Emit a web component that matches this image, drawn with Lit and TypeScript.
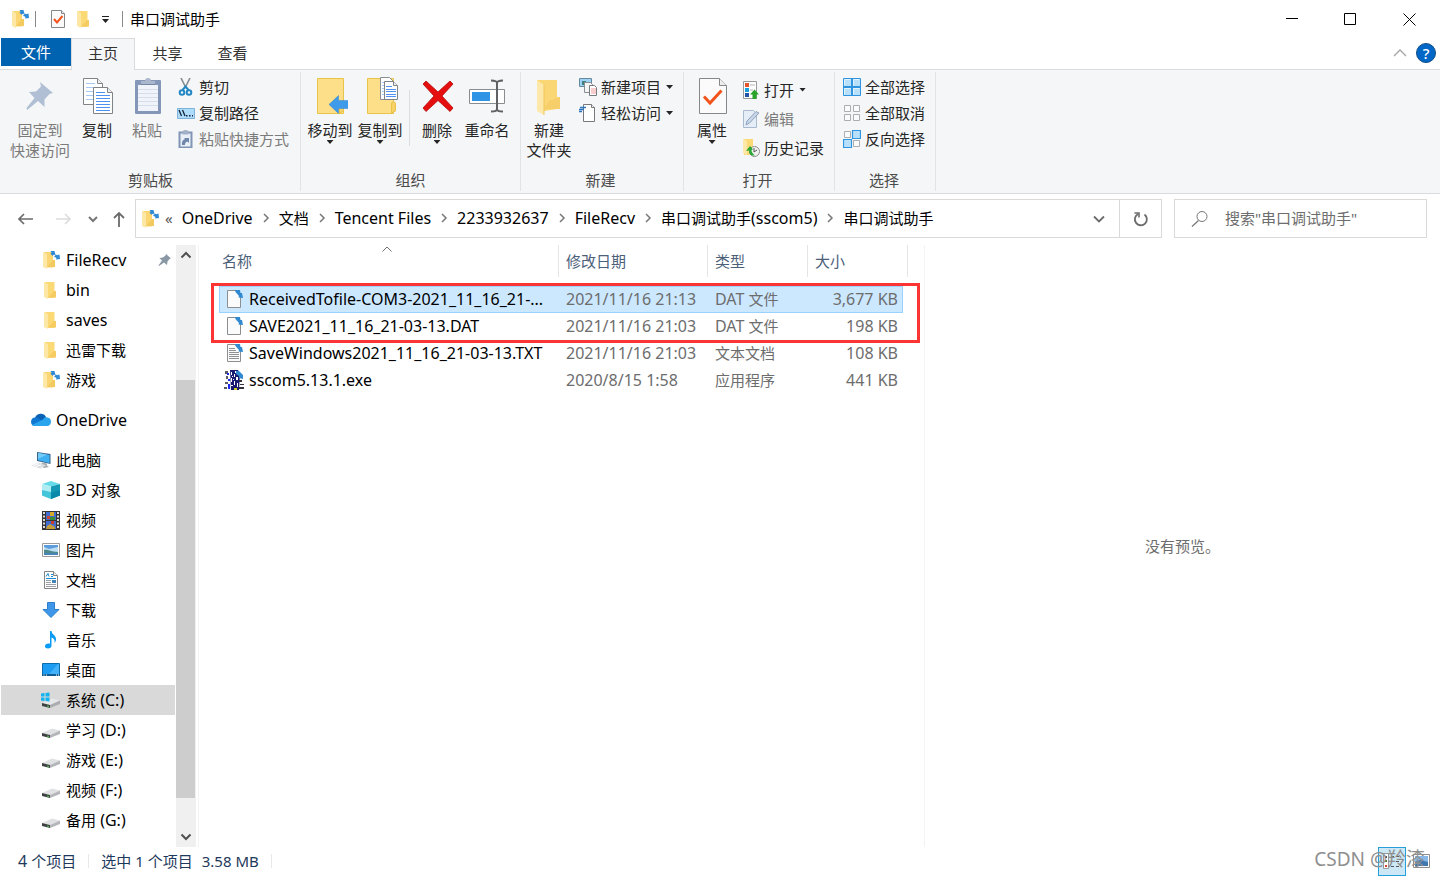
import { LitElement, html, css, nothing, TemplateResult } from "lit";
import { customElement, property, state } from "lit/decorators.js";
import { classMap } from "lit/directives/class-map.js";

const folderShape = html`
  <svg width="18" height="18" viewBox="0 0 18 18" aria-hidden="true">
    <path d="M3 1h9.500v16H6z" fill="#fbd975"/><path d="M12 10h2v6.500H6z" fill="#f5cb62"/>
    <path d="M2 1l4 2v15l-4-2z" fill="#fde7a5"/>
  </svg>`;

const linkedFolder = html`
  <svg width="18" height="18" viewBox="0 0 18 18" aria-hidden="true">
    <path d="M2 1h9v15.500H5z" fill="#fbd673"/><path d="M11 9h2v7H5z" fill="#f3ca60"/>
    <path d="M1 1l4 2v15l-4-2z" fill="#fde8a8"/>
    <path d="M8.500 0l4 0 1 4-1.500-.300-1.500 1-2-2 1-1zM12 5.500l2-2 1 .800 2.500-.800.500 4.500-4 .500.500-1.500z" fill="#2f8ad6"/>
  </svg>`;

const pinSmall = html`
  <svg width="14" height="14" viewBox="0 0 14 14" aria-hidden="true">
    <path d="M8 1l5 4.500-1.500.500-2 2.500-.500 3.500-3-2.500L1 13l-.500-.500 3.500-5L1.500 5 5 4.500 7.500 2.500z" fill="#8a98a5"/>
  </svg>`;

const drive = html`
  <svg width="20" height="18" viewBox="0 0 20 18" aria-hidden="true">
    <path d="M1 12l10-4.500 8 2L9 14z" fill="#e0e1e3"/>
    <path d="M9 14L19 9.500V13L9 17z" fill="#b4b6b9"/>
    <path d="M1 12l8 2v3L1 15z" fill="#3f4144"/>
    <path d="M6 14.500l2 .600v1l-2-.500z" fill="#42d03c"/>
  </svg>`;

const systemDrive = html`
  <svg width="20" height="18" viewBox="0 0 20 18" aria-hidden="true">
    <path d="M1 12l10-4.500 8 2L9 14z" fill="#e6e7e8"/>
    <path d="M9 14L19 9.500V13L9 17z" fill="#aaacaf"/>
    <path d="M1 12l8 2v3L1 15z" fill="#3f4144"/>
    <path d="M6 14.500l2 .600v1l-2-.500z" fill="#42d03c"/>
    <path d="M0 2.500l3.500-.500v3.500H0zM4.500 2L8.500 1.500v4h-4zM0 6.500h3.500V10L0 9.500zM4.500 6.500h4v4l-4-.500z" fill="#12b3ee"/>
  </svg>`;

const sideIcons: Record<string, TemplateResult> = {
  folder: folderShape,
  linked: linkedFolder,
  cloud: html`
    <svg width="21" height="16" viewBox="0 0 21 16" aria-hidden="true">
      <path d="M5 6A6 6 0 0 1 16 5l-2 5-8-1z" fill="#0a62b5"/>
      <path d="M4.500 14A4.300 4.300 0 0 1 5 5.500c2 0 3 .500 4 1.200L13 9l-4 5z" fill="#1178d2"/>
      <path d="M2 13L13 7.500c1-2 3-2.500 4.500-2A4.300 4.300 0 0 1 17 14H4.500C3.500 14 2.500 13.500 2 13z" fill="#2aa4ec"/>
    </svg>`,
  pc: html`
    <svg width="21" height="18" viewBox="0 0 21 18" aria-hidden="true">
      <path d="M7 1l13.500 2v10L7 10z" fill="#38648a"/><path d="M8 2l11.500 2v8L8 9.300z" fill="#3fb0f2"/>
      <path d="M8 2l9 1.500L8 8z" fill="#73cbf8"/>
      <path d="M12 11.500l5 1v2l2 1.500-5 1-3-2z" fill="#a5adb3"/>
      <path d="M1 14.500l8-3 7 3-6 3z" fill="#d9dee2"/><path d="M3 14.500l6-1.800M5 15.800l6-1.800" stroke="#fff"/>
    </svg>`,
  cube: html`
    <svg width="18" height="18" viewBox="0 0 18 18" aria-hidden="true">
      <path d="M0 3l9-3 9 3-9 2.500z" fill="#67dbe8"/><path d="M0 3l9 2.500V18l-9-3.500z" fill="#b0edf2"/>
      <path d="M0 9l9 2v7l-9-3.500z" fill="#44c5da"/>
      <path d="M18 3L9 5.500V18l9-3.500z" fill="#1697b3"/><path d="M18 9L9 12v6l9-3.500z" fill="#0b89a8"/>
    </svg>`,
  video: html`
    <svg width="18" height="19" viewBox="0 0 18 19" aria-hidden="true">
      <path d="M0 0h18v19H0z" fill="#343434"/><path d="M4 1h10v8H4zM4 10h10v8H4z" fill="#3f6ed0"/>
      <path d="M1 1h2v2H1zM1 4.500h2v2H1zM1 8h2v2H1zM1 11.500h2v2H1zM1 15h2v2H1zM15 1h2v2h-2zM15 4.500h2v2h-2zM15 8h2v2h-2zM15 11.500h2v2h-2zM15 15h2v2h-2z" fill="#dcdcdc"/>
      <path d="M8 1h4v4H8z" fill="#d7aa29"/><path d="M5 5h3v3H5z" fill="#cf4638"/><path d="M8 6h5v3H8z" fill="#398d35"/>
      <path d="M9 10h3v3H9z" fill="#c83b2e"/><path d="M5 15l3-2 5 3v2H4z" fill="#c59c37"/>
    </svg>`,
  image: html`
    <svg width="18" height="16" viewBox="0 0 18 16" aria-hidden="true">
      <path d="M.500 1.500h17v13H.500z" fill="#fff" stroke="#9b9b9b"/><path d="M2 3h14v10H2z" fill="#bddff6"/>
      <path d="M2 3h14v2L7 7 2 5z" fill="#5b9cdd"/><path d="M2 8c4-1 7 2 14 2v3H2z" fill="#4f8a8b"/><path d="M2 11h14v2H2z" fill="#4886b9"/>
    </svg>`,
  document: html`
    <svg width="18" height="18" viewBox="0 0 18 18" aria-hidden="true">
      <path d="M2.500.500h9l4 4v13h-13z" fill="#fff" stroke="#858585"/><path d="M11.500.500v4h4" fill="#eee" stroke="#858585"/>
      <path d="M4 5.500l2-3 1 3M9 3.500h2M9 5.500h2M4 7.500h10" fill="none" stroke="#198ad6"/>
      <path d="M4 9.500h5M4 11.500h5M4 13.500h10M4 15.500h10" stroke="#9aa0a5"/><path d="M10 9h4v3h-4z" fill="#4383b5"/>
    </svg>`,
  download: html`
    <svg width="18" height="18" viewBox="0 0 18 18" aria-hidden="true">
      <path d="M5.500 1.500h7v7h4.500l-8 8-8-8h4.500z" fill="#3e97e8" stroke="#2b7fcd"/>
    </svg>`,
  music: html`
    <svg width="18" height="18" viewBox="0 0 18 18" aria-hidden="true">
      <path d="M8 0h1.500c.500 4 4.500 4 4.500 8 0 2-.700 3-1.500 4 .500-3-.500-4.500-3-5.500v8c0 2-1.500 3-3.500 3s-3-1-3-2.300c0-2 2.500-3.200 5-2.400z" fill="#0a9bf5"/>
    </svg>`,
  desktop: html`
    <svg width="18" height="16" viewBox="0 0 18 16" aria-hidden="true">
      <path d="M.500 1.500h17v12H.500z" fill="#1b9bf2" stroke="#0b6cae"/><path d="M16 2h1v10H7z" fill="#42b1fa"/>
      <path d="M0 12h18v2H0z" fill="#0d5d95"/><path d="M1.500 13h1M4 13h1M14 13h1M16 13h1" stroke="#fff"/>
    </svg>`,
  system: systemDrive,
  drive,
};

const bigIcons: Record<string, TemplateResult> = {
  pin: html`
    <svg width="36" height="38" viewBox="0 0 36 38" aria-hidden="true">
      <path d="M18 5l13 11-3.500 1-5 5.500 0 7.500-6.500-6-9 7.500L5 33l-.500-2 8-10L7 15l7-.500 5-5z" fill="#b1bfd4"/>
    </svg>`,
  copy: html`
    <svg width="36" height="38" viewBox="0 0 36 38" aria-hidden="true">
      <path d="M4.500 1.500h14l5 5v21h-19z" fill="#fff" stroke="#7f8489"/><path d="M18.500 1.500v5h5" fill="#eee" stroke="#7f8489"/>
      <path d="M7 6.500h9M7 10.500h14M7 14.500h14M7 18.500h14M7 22.500h14" stroke="#a6c8f5"/>
      <path d="M14.500 10.500h14l5 5v21h-19z" fill="#fff" stroke="#7f8489"/><path d="M28.500 10.500v5h5" fill="#eee" stroke="#7f8489"/>
      <path d="M17 15.500h9M17 18.500h14M17 21.500h14M17 24.500h14M17 27.500h14M17 30.500h14M17 33.500h14" stroke="#4e91f3"/>
    </svg>`,
  paste: html`
    <svg width="36" height="38" viewBox="0 0 36 38" aria-hidden="true">
      <rect x="6" y="3" width="26" height="34" rx="1" fill="#8497b8"/><path d="M9 8h20v26H9z" fill="#f0f4fa"/>
      <path d="M9 12.500h20M9 16.500h20M9 20.500h20M9 24.500h20M9 28.500h20" stroke="#d5deeb"/>
      <path d="M12 4h4a3 3 0 0 1 6 0h4v4H12z" fill="#aab7cc"/><path d="M12 7h14v1H12z" fill="#7687a3"/>
    </svg>`,
  move: html`
    <svg width="36" height="38" viewBox="0 0 36 38" aria-hidden="true">
      <path d="M5.500 1.500h26v35h-26z" fill="#fddf89" stroke="#e9c44b"/><path d="M27.500 36V27c0-3 4-3 4 0v7z" fill="#f8d268" stroke="#e9c44b"/>
      <path d="M17 27.500l9.500-9v5h10v8h-10v5z" fill="#3e9be9" stroke="#2f83d0" stroke-width=".500"/>
    </svg>`,
  copyTo: html`
    <svg width="36" height="38" viewBox="0 0 36 38" aria-hidden="true">
      <path d="M5.500 1.500h26v35h-26z" fill="#fddf89" stroke="#e9c44b"/><path d="M29.500 36V27c0-3 4-3 4 0v7z" fill="#f8d268" stroke="#e9c44b"/>
      <path d="M18.500.500h9l4 4v18h-13z" fill="#fff" stroke="#8b8f93"/><path d="M20 5.500h8M20 8.500h8M20 11.500h8M20 14.500h8M20 17.500h8" stroke="#a6c8f5"/>
      <path d="M22.500 4.500h9l4 4v14h-13z" fill="#fff" stroke="#7f8489"/><path d="M31.500 4.500v4h4" fill="#eee" stroke="#7f8489"/>
      <path d="M24 9.500h6M24 12.500h10M24 14.500h10M24 17.500h10M24 19.500h10" stroke="#4e91f3"/>
    </svg>`,
  remove: html`
    <svg width="36" height="38" viewBox="0 0 36 38" aria-hidden="true">
      <path d="M7 4l12 11L31 4l3 3-11 12 11 12-3 3.500L19 23.500 7 34.500 4 31l11-12L4 7z" fill="#e60f0f" stroke="#b20a0a" stroke-width=".800"/>
    </svg>`,
  rename: html`
    <svg width="38" height="38" viewBox="0 0 38 38" aria-hidden="true">
      <path d="M1.500 12.500h35v14h-35z" fill="#fff" stroke="#8a8d90"/><path d="M4 15h18v9H4z" fill="#2f93e6"/>
      <path d="M29 5v28M23 3.500c3 0 6 0 6 2.500 0-2.500 3-2.500 6-2.500M23 34.500c3 0 6 0 6-2.500 0 2.500 3 2.500 6 2.500" fill="none" stroke="#5f6265" stroke-width="2"/>
    </svg>`,
  newFolder: html`
    <svg width="36" height="38" viewBox="0 0 36 38" aria-hidden="true">
      <path d="M6 3h20v29l-13 2z" fill="#fbd675"/><path d="M19 23h3l5-3h2v12H13z" fill="#f6cf6a"/>
      <path d="M6 3l7 5v30l-7-4z" fill="#fde8a9"/><path d="M13 8v30" stroke="#efc559"/>
    </svg>`,
  properties: html`
    <svg width="36" height="38" viewBox="0 0 36 38" aria-hidden="true">
      <path d="M5.500 1.500h20l7 7v28h-27z" fill="#fbfbfb" stroke="#85888b"/><path d="M25.500 1.500v7h7" fill="#eee" stroke="#85888b"/>
      <path d="M10 19.500l6 6.500L27.500 13.500" fill="none" stroke="#f2541b" stroke-width="3"/>
    </svg>`,
};

const smallIcons: Record<string, TemplateResult> = {
  cut: html`
    <svg width="18" height="18" viewBox="0 0 18 18" aria-hidden="true">
      <path d="M4 0l5 10M13 0L8 10" stroke="#858b91" stroke-width="1.600"/>
      <circle cx="5" cy="14.500" r="2.300" fill="none" stroke="#2287c4" stroke-width="2"/><circle cx="12" cy="14.500" r="2.300" fill="none" stroke="#2287c4" stroke-width="2"/>
      <path d="M5.500 12L8.500 8.500 11.500 12" fill="none" stroke="#2287c4" stroke-width="2"/>
    </svg>`,
  path: html`
    <svg width="18" height="18" viewBox="0 0 18 18" aria-hidden="true">
      <path d="M.500 4.500h17v10H.500z" fill="#b0dcfb" stroke="#7fb2d8"/>
      <path d="M2 6l2.500 6M5.500 6L8 12" stroke="#10233a" stroke-width="1.300"/><path d="M9 11h1.500v1.500H9zM12 11h1.500v1.500H12zM15 11h1v1.500h-1z" fill="#10233a"/>
    </svg>`,
  shortcut: html`
    <svg width="18" height="18" viewBox="0 0 18 18" aria-hidden="true">
      <path d="M2.500 2.500h12v15h-12z" fill="#e9eff7" stroke="#8195b6" stroke-width="2"/><path d="M5.500 2a3 2 0 0 1 6 0v2.500h-6z" fill="#a3b1c8"/>
      <path d="M5 15c-.500-3 .500-5 3-6L7 8h5v5l-1.500-1.500C8.500 12 8 13 8 15z" fill="#7087ab"/>
    </svg>`,
  newItem: html`
    <svg width="18" height="18" viewBox="0 0 18 18" aria-hidden="true">
      <path d="M.500.500h12v8H.500z" fill="#9bd2f5" stroke="#68889d"/><path d="M3 3h4v4H3z" fill="#43807c"/>
      <path d="M5.500 4.500h6l2 2v8h-8z" fill="#f5f5f5" stroke="#8c8f92"/>
      <path d="M10.500 7.500h5l2 2v8h-7z" fill="#fff" stroke="#77797c"/><path d="M12 11h5M12 13h5M12 15h5" stroke="#ee9a9a"/>
    </svg>`,
  easyAccess: html`
    <svg width="18" height="18" viewBox="0 0 18 18" aria-hidden="true">
      <path d="M4.500.500h8l3 3v14h-11z" fill="#fff" stroke="#77797c"/><path d="M12.500.500v3h3" fill="#eee" stroke="#77797c"/>
      <path d="M1 3.500h6M0 5.500h5M0 7.500h3" stroke="#2e76bd" stroke-width="1.300"/>
    </svg>`,
  open: html`
    <svg width="18" height="18" viewBox="0 0 18 18" aria-hidden="true">
      <path d="M1.500.500h13v17h-13z" fill="#fff" stroke="#989a9c"/><path d="M3 2h4v4H3z" fill="#e4572e"/><path d="M3 7h4v4H3z" fill="#1ba0dc"/><path d="M3 12h4v4H3z" fill="#2354a8"/>
      <path d="M8 4h5M8 9h3" stroke="#b3b3b3"/><path d="M12.500 8.500l4.500 5h-2.500v5h-4v-5H8z" fill="#29a329"/>
    </svg>`,
  edit: html`
    <svg width="18" height="18" viewBox="0 0 18 18" aria-hidden="true">
      <path d="M1.500.500h10l3 3v14h-13z" fill="#e5edf7" stroke="#a9b9d0"/><path d="M4 15l1-4 9-9.500 3 1.500-9.500 10z" fill="#c8d5e6" stroke="#8fa3c0"/>
    </svg>`,
  history: html`
    <svg width="18" height="18" viewBox="0 0 18 18" aria-hidden="true">
      <path d="M2 0h9v16H2z" fill="#fbd975"/><path d="M1 0l4 2v14l-4-2z" fill="#fde8a8"/>
      <circle cx="12.500" cy="12.500" r="5" fill="#f2f2f2" stroke="#8b8b8b"/><path d="M12 9v4l3-2" fill="none" stroke="#555"/>
      <path d="M4 12l4-5 3 3.500-1.500.500c0 2 1 3.500 3.500 5.500-4 .500-6-1.500-6-5z" fill="#2aa735"/>
    </svg>`,
  selectAll: html`
    <svg width="18" height="18" viewBox="0 0 18 18" aria-hidden="true">
      <path d="M.500.500h17v17H.500z" fill="#b8e0fb" stroke="#2f95e0"/><path d="M9 0v18M0 9h18" stroke="#2f95e0" stroke-width="2"/>
      <path d="M1.500 7.500v-6h6M10.500 7.500v-6h6M1.500 16.500v-6h6M10.500 16.500v-6h6" fill="none" stroke="#e3f3fd"/>
    </svg>`,
  selectNone: html`
    <svg width="18" height="18" viewBox="0 0 18 18" aria-hidden="true">
      <path d="M1.500 1.500h6v6h-6zM10.500 1.500h6v6h-6zM1.500 10.500h6v6h-6zM10.500 10.500h6v6h-6z" fill="#fbfbfb" stroke="#abadaf"/>
    </svg>`,
  invert: html`
    <svg width="18" height="18" viewBox="0 0 18 18" aria-hidden="true">
      <path d="M1.500 1.500h6v6h-6zM10.500 10.500h6v6h-6z" fill="#fbfbfb" stroke="#abadaf"/>
      <path d="M9.500.500h8v8h-8zM.500 9.500h8v8h-8z" fill="#b8e0fb" stroke="#2f95e0" stroke-width="1.200"/>
    </svg>`,
};

const fileIcons: Record<string, TemplateResult> = {
  dat: html`
    <svg width="20" height="20" viewBox="0 0 20 20" aria-hidden="true">
      <path d="M3.500 1.500h10l3 3v14h-13z" fill="#fbfbfb" stroke="#8c8f92"/>
      <path d="M11 1l5 0 .500 3 1.500 0 1 5-4.500-.500.500-1.500L11.500 3z" fill="#3089d0"/>
    </svg>`,
  txt: html`
    <svg width="20" height="20" viewBox="0 0 20 20" aria-hidden="true">
      <path d="M3.500 1.500h10l3 3v14h-13z" fill="#fbfbfb" stroke="#8c8f92"/>
      <path d="M5 5.500h6M5 7.500h7M5 9.500h10M5 11.500h10M5 13.500h10M5 15.500h10" stroke="#8f9294"/>
      <path d="M11 1l5 0 .500 3 1.500 0 1 5-4.500-.500.500-1.500L11.500 3z" fill="#3089d0"/>
    </svg>`,
  exe: html`
    <svg width="20" height="20" viewBox="0 0 20 20" aria-hidden="true">
      <path d="M6 0h8l2 4-1 16H7z" fill="#191970"/><path d="M1 1h3v3H1zM2 6h2v3H2zM0 17h3v2H0zM1 12h3v2H1z" fill="#5a5a66"/>
      <path d="M3 3h2v2H3zM4 9h2v2H4zM4 14h2v5H4z" fill="#1a28e8"/>
      <path d="M7 2h1v3H7zM10 4h1v3h-1zM7 8h1v4H7zM12 7h2v3h-2zM10 11h1v4h-1zM13 13h1v4h-1zM7 15h2v1H7zM11 1h1v2h-1zM8 6h1v1H8zM9 9h1v1H9z" fill="#fff"/>
      <path d="M15 10h3v2h-3zM16 14h4v1h-4zM15 17h5v2h-5z" fill="#33333d"/><path d="M10 18h3v2h-3z" fill="#d8cf24"/>
      <path d="M12 1l3 0 4 4 0 4-4-1 0-2-3-2z" fill="#3089d0"/>
    </svg>`,
};

interface Entry { icon: string; label: string; root?: boolean; gap?: boolean; pinned?: boolean; active?: boolean; }
interface FileRow { name: string; icon: string; date: string; type: string; size: string; selected?: boolean; }

const places: Entry[] = [
  { icon: "linked", label: "FileRecv", pinned: true },
  { icon: "folder", label: "bin" },
  { icon: "folder", label: "saves" },
  { icon: "folder", label: "迅雷下载" },
  { icon: "linked", label: "游戏" },
  { icon: "cloud", label: "OneDrive", root: true, gap: true },
  { icon: "pc", label: "此电脑", root: true, gap: true },
  { icon: "cube", label: "3D 对象" },
  { icon: "video", label: "视频" },
  { icon: "image", label: "图片" },
  { icon: "document", label: "文档" },
  { icon: "download", label: "下载" },
  { icon: "music", label: "音乐" },
  { icon: "desktop", label: "桌面" },
  { icon: "system", label: "系统 (C:)", active: true },
  { icon: "drive", label: "学习 (D:)" },
  { icon: "drive", label: "游戏 (E:)" },
  { icon: "drive", label: "视频 (F:)" },
  { icon: "drive", label: "备用 (G:)" },
];

const received: FileRow[] = [
  { name: "ReceivedTofile-COM3-2021_11_16_21-...", icon: "dat", date: "2021/11/16 21:13", type: "DAT 文件", size: "3,677 KB", selected: true },
  { name: "SAVE2021_11_16_21-03-13.DAT", icon: "dat", date: "2021/11/16 21:03", type: "DAT 文件", size: "198 KB" },
];
const others: FileRow[] = [
  { name: "SaveWindows2021_11_16_21-03-13.TXT", icon: "txt", date: "2021/11/16 21:03", type: "文本文档", size: "108 KB" },
  { name: "sscom5.13.1.exe", icon: "exe", date: "2020/8/15 1:58", type: "应用程序", size: "441 KB" },
];

const crumbs = ["OneDrive", "文档", "Tencent Files", "2233932637", "FileRecv", "串口调试助手(sscom5)", "串口调试助手"];

// Latin runs are set one size up so that they balance the Chinese glyphs.
const mixed = (text: string) =>
  (text.match(/[\x20-\x7e]+|[^\x20-\x7e]+/g) ?? []).map((run) => (/^[\x20-\x7e]/.test(run) ? html`<span class="latin">${run}</span>` : run));

const resets = css`
  *, *::before, *::after { box-sizing: border-box; }
  button { font: inherit; color: inherit; background: none; border: 0; padding: 0; margin: 0; }
  a { color: inherit; text-decoration: none; }
  ul, ol { list-style: none; margin: 0; padding: 0; }
  svg { display: block; flex: none; }
  .latin { font-size: 16px; white-space: pre; }
`;

@customElement("ribbon-bar")
class RibbonBar extends LitElement {
  static styles = [resets, css`
    :host { display: flex; height: 125px; padding: 2px 0 2px 1px; background: #f5f6f7; border-top: 1px solid #dadbdc; border-bottom: 1px solid #dadbdc; color: #262626; }
    .group { display: flex; flex-direction: column; justify-content: space-between; flex: none; padding: 2px 10px 1px 3px; border-right: 1px solid #e2e3e4; }
    .group.clipboard { padding-left: 7px; padding-right: 11px; }
    .group.organize { padding-right: 8px; padding-left: 4px; }
    .group.select { padding-left: 8px; }
    .tools { display: flex; align-items: flex-start; }
    .caption { line-height: 20px; margin-right: -4px; text-align: center; color: #4a4a4a; }
    .select .caption { margin-right: 0; }
    .big { display: flex; flex-direction: column; align-items: center; width: 50px; padding-top: 3px; line-height: 20px; white-space: nowrap; }
    .big.wide { width: 64px; }
    .big svg { margin-bottom: 5px; }
    .big .arrow { margin: 0; }
    .arrow { width: 7px; height: 4px; background: #262626; clip-path: polygon(0 0, 100% 0, 50% 100%); margin-left: 1px; }
    .divider { width: 1px; height: 56px; background: #dcdddf; margin: 16px 2px 0 4px; }
    .stack { display: grid; grid-auto-rows: 26px; margin-left: 5px; }
    .stack.loose { grid-auto-rows: 29px; padding-top: 1px; }
    .select .stack { margin-left: 0; }
    .small { display: flex; align-items: center; gap: 4px; line-height: 20px; white-space: nowrap; }
    .muted { color: #7b7b7b; }
  `];

  private big(icon: string, label: string[], opts: { wide?: boolean; muted?: boolean; menu?: boolean } = {}) {
    return html`<button type="button" class=${classMap({ big: true, wide: !!opts.wide, muted: !!opts.muted })}>
      ${bigIcons[icon]}${label.map((line) => html`<span>${line}</span>`)}${opts.menu ? html`<span class="arrow"></span>` : nothing}
    </button>`;
  }

  private small(icon: string, label: string, opts: { muted?: boolean; menu?: boolean } = {}) {
    return html`<button type="button" class=${classMap({ small: true, muted: !!opts.muted })}>
      ${smallIcons[icon]}<span>${label}</span>${opts.menu ? html`<span class="arrow"></span>` : nothing}
    </button>`;
  }

  render() {
    return html`
      <section class="group clipboard">
        <div class="tools">
          ${this.big("pin", ["固定到", "快速访问"], { wide: true, muted: true })}
          ${this.big("copy", ["复制"])}
          ${this.big("paste", ["粘贴"], { muted: true })}
          <div class="stack">
            ${this.small("cut", "剪切")}
            ${this.small("path", "复制路径")}
            ${this.small("shortcut", "粘贴快捷方式", { muted: true })}
          </div>
        </div>
        <div class="caption">剪贴板</div>
      </section>
      <section class="group organize">
        <div class="tools">
          ${this.big("move", ["移动到"], { menu: true })}
          ${this.big("copyTo", ["复制到"], { menu: true })}
          <div class="divider"></div>
          ${this.big("remove", ["删除"], { menu: true })}
          ${this.big("rename", ["重命名"])}
        </div>
        <div class="caption">组织</div>
      </section>
      <section class="group">
        <div class="tools">
          ${this.big("newFolder", ["新建", "文件夹"])}
          <div class="stack">
            ${this.small("newItem", "新建项目", { menu: true })}
            ${this.small("easyAccess", "轻松访问", { menu: true })}
          </div>
        </div>
        <div class="caption">新建</div>
      </section>
      <section class="group">
        <div class="tools">
          ${this.big("properties", ["属性"], { menu: true })}
          <div class="stack loose">
            ${this.small("open", "打开", { menu: true })}
            ${this.small("edit", "编辑", { muted: true })}
            ${this.small("history", "历史记录")}
          </div>
        </div>
        <div class="caption">打开</div>
      </section>
      <section class="group select">
        <div class="tools">
          <div class="stack">
            ${this.small("selectAll", "全部选择")}
            ${this.small("selectNone", "全部取消")}
            ${this.small("invert", "反向选择")}
          </div>
        </div>
        <div class="caption">选择</div>
      </section>`;
  }
}

@customElement("place-tree")
class PlaceTree extends LitElement {
  @property({ attribute: false }) entries: Entry[] = [];

  static styles = [resets, css`
    :host { display: flex; width: 199px; flex: none; border-right: 1px solid #f3f3f3; color: #000; }
    nav { flex: 1; min-width: 0; }
    .place { display: flex; align-items: center; gap: 6px; height: 30px; margin-left: 1px; padding-left: 41px; line-height: 20px; white-space: nowrap; }
    .place.root { padding-left: 29px; gap: 5px; }
    .place.gap { margin-top: 10px; }
    .place.active { background: #d9d9d9; }
    .icon { display: flex; justify-content: center; width: 18px; }
    .root .icon { width: 21px; }
    .pin { margin-left: auto; padding-right: 3px; }
    .scroll { display: flex; flex-direction: column; width: 20px; margin: 0 2px 0 1px; background: #f0f0f0; }
    .scroll button { display: flex; align-items: center; justify-content: center; height: 20px; flex: none; padding-right: 1px; }
    .rail { flex: 1; display: flex; flex-direction: column; }
    .before { flex: 115; }
    .thumb { flex: 418; margin-right: 1px; background: #cdcdcd; }
    .after { flex: 29; }
  `];

  render() {
    return html`
      <nav aria-label="导航窗格">
        <ul>
          ${this.entries.map((e) => html`
            <li><a href="#" class=${classMap({ place: true, root: !!e.root, gap: !!e.gap, active: !!e.active })}>
              <span class="icon">${sideIcons[e.icon]}</span><span>${mixed(e.label)}</span>
              ${e.pinned ? html`<span class="pin">${pinSmall}</span>` : nothing}
            </a></li>`)}
        </ul>
      </nav>
      <div class="scroll">
        <button type="button" aria-label="向上滚动"><svg width="12" height="8" viewBox="0 0 12 8"><path d="M1.500 6.500L6 2l4.500 4.500" fill="none" stroke="#505050" stroke-width="2"/></svg></button>
        <div class="rail"><div class="before"></div><div class="thumb"></div><div class="after"></div></div>
        <button type="button" aria-label="向下滚动"><svg width="12" height="8" viewBox="0 0 12 8"><path d="M1.500 1.500L6 6l4.500-4.500" fill="none" stroke="#505050" stroke-width="2"/></svg></button>
      </div>`;
  }
}

@customElement("file-list")
class FileList extends LitElement {
  static styles = [resets, css`
    :host { display: block; flex: 1; min-width: 0; padding-left: 20px; border-right: 1px solid #f3f3f3; color: #6d6d6d; }
    table, thead, tbody { display: block; }
    table { width: 689px; max-width: 100%; }
    tr { display: grid; grid-template-columns: 340px 149px 100px 100px; }
    th { display: flex; align-items: center; position: relative; height: 32px; padding: 0 7px; border-right: 1px solid #e5e5e5; font-weight: 400; color: #4c607a; line-height: 20px; }
    th:first-child { padding-left: 3px; }
    .sort { position: absolute; top: 1px; left: 50%; margin-left: -8px; }
    thead { margin-bottom: 9px; }
    tbody tr { grid-template-columns: 340px 149px 100px 95px; margin-right: 5px; height: 27px; }
    td { display: flex; align-items: center; padding: 0 7px 2px; white-space: nowrap; line-height: 20px; min-width: 0; border: solid transparent; border-width: 1px 0; }
    td:first-child { gap: 5px; padding: 0 0 2px 4px; border-left-width: 1px; color: #000; font-size: 16px; }
    .date { font-size: 16px; }
    .size { justify-content: flex-end; padding-right: 4px; border-right-width: 1px; }
    .selected td { background: #cce8ff; border-color: #99d1ff; }
    .marked { position: relative; }
    .marked::after { content: ""; position: absolute; inset: -3px -12px -3px -8px; border: 3px solid #fa3534; pointer-events: none; }
  `];

  private row(f: FileRow) {
    return html`<tr class=${classMap({ selected: !!f.selected })}>
      <td>${fileIcons[f.icon]}<span>${f.name}</span></td><td class="date">${f.date}</td><td><span>${mixed(f.type)}</span></td><td class="size"><span>${mixed(f.size)}</span></td>
    </tr>`;
  }

  render() {
    return html`<table>
      <thead><tr>
        <th scope="col"><svg class="sort" width="12" height="6" viewBox="0 0 12 6" aria-hidden="true"><path d="M1.500 5.500L6 1l4.500 4.500" fill="none" stroke="#6f6f6f"/></svg>名称</th>
        <th scope="col">修改日期</th><th scope="col">类型</th><th scope="col">大小</th>
      </tr></thead>
      <tbody class="marked">${received.map((f) => this.row(f))}</tbody>
      <tbody>${others.map((f) => this.row(f))}</tbody>
    </table>`;
  }
}

@customElement("app-root")
class AppRoot extends LitElement {
  @state() private tab = "主页";

  static styles = [resets, css`
    :host { display: flex; flex-direction: column; min-height: 100vh; background: #fff; font: 15px/20px "Noto Sans", "Noto Sans CJK SC", sans-serif; color: #000; position: relative; }
    .title { display: flex; align-items: center; height: 38px; padding: 0 1px 0 11px; }
    .title h1 { font-size: 15px; line-height: 20px; font-weight: 400; margin: 0 auto 0 7px; }
    .bar { width: 1px; height: 16px; background: #8a8a8a; }
    .quick { display: flex; align-items: center; gap: 8px; margin: 0 12px 0 13px; }
    .origin { display: flex; align-items: center; gap: 6px; }
    .caption { display: flex; align-items: center; justify-content: center; width: 59px; height: 38px; }
    .tabs { display: flex; height: 32px; margin: 0 0 -1px 1px; color: #333; position: relative; z-index: 1; }
    .tab { width: 65px; height: 31px; padding-bottom: 2px; }
    .tab.file { width: 70px; height: 28px; padding: 0; background: #0063b1; color: #fff; }
    .tab.active { width: 64px; height: 32px; padding-bottom: 4px; background: #f5f6f7; border: 1px solid #dadbdc; border-bottom: 0; }
    .help { display: flex; align-items: center; gap: 9px; margin-left: auto; padding: 0 4px 2px 0; }
    .question { width: 20px; height: 20px; border-radius: 50%; background: #0067c7; border: 1px solid #124d86; color: #fff; font-weight: 500; line-height: 18px; text-align: center; }
    .address { display: flex; align-items: center; padding: 5px 13px 7px 0; height: 51px; }
    .travel { display: grid; grid-template-columns: 38px 38px 22px 30px; align-items: center; justify-items: center; width: 135px; padding-left: 6px; flex: none; }
    .box { display: flex; align-items: center; height: 39px; border: 1px solid #d9d9d9; }
    .where { flex: 1; min-width: 0; padding-left: 5px; }
    .crumbs { display: flex; align-items: center; flex: 1; min-width: 0; margin-left: 6px; padding-bottom: 2px; white-space: nowrap; }
    .crumbs li { display: flex; align-items: center; }
    .crumbs svg { margin: 0 9px; }
    .less { color: #555; margin-right: 9px; }
    .where button { display: flex; align-items: center; justify-content: center; width: 41px; height: 37px; }
    .where .refresh { border-left: 1px solid #d9d9d9; width: 42px; }
    .search { width: 253px; margin-left: 12px; padding-left: 16px; gap: 16px; flex: none; }
    .search input { flex: 1; min-width: 0; border: 0; padding: 0 0 2px; outline: 0; background: none; font: inherit; }
    .search input::placeholder { color: #6d6d6d; opacity: 1; }
    .body { display: flex; flex: 1; }
    .preview { display: flex; align-items: center; justify-content: center; flex: 0 0 515px; color: #6d6d6d; }
    .status { display: flex; align-items: center; height: 30px; padding: 0 10px 2px 18px; color: #1e395b; }
    .status .sep { width: 1px; height: 14px; background: #e8e8e8; margin: 0 12px; }
    .status .amount { margin-left: 9px; }
    .views { display: flex; align-items: center; gap: 7px; margin-left: auto; }
    .view { display: flex; align-items: center; justify-content: center; width: 28px; height: 29px; background: #cce8f6; border: 1px solid #26a0da; }
    .mark { position: absolute; right: 15px; bottom: 4px; font-size: 19px; line-height: 28px; color: #8f8f8f; }
  `];

  private renderTab(name: string) {
    return html`<button type="button" role="tab" class=${classMap({ tab: true, active: this.tab === name })} @click=${() => { this.tab = name; }}>${name}</button>`;
  }

  render() {
    const next = html`<svg width="8" height="10" viewBox="0 0 8 10" aria-hidden="true"><path d="M2 1l4 4-4 4" fill="none" stroke="#777" stroke-width="1.500"/></svg>`;
    return html`
      <header class="title">
        <div class="origin">${linkedFolder}<span class="bar"></span></div>
        <div class="quick">
          <svg width="18" height="20" viewBox="0 0 18 20" aria-hidden="true"><path d="M2.500 1.500h10l3 3v14h-13z" fill="#fafafa" stroke="#85888b"/><path d="M12.500 1.500v3h3" fill="#eee" stroke="#85888b"/><path d="M5 10l3 3.500L13.500 7" fill="none" stroke="#f2541b" stroke-width="2"/></svg>
          ${folderShape}
          <svg width="9" height="8" viewBox="0 0 9 8" aria-hidden="true"><path d="M1 1.500h7" stroke="#222"/><path d="M1 4h7L4.500 8z" fill="#222"/></svg>
        </div>
        <span class="bar"></span>
        <h1>串口调试助手</h1>
        <button type="button" class="caption" aria-label="最小化"><svg width="13" height="13" viewBox="0 0 13 13"><path d="M1 5.500h12" stroke="#000"/></svg></button>
        <button type="button" class="caption" aria-label="最大化"><svg width="13" height="13" viewBox="0 0 13 13"><path d="M.500.500h11v11H.500z" fill="none" stroke="#000"/></svg></button>
        <button type="button" class="caption" aria-label="关闭"><svg width="13" height="13" viewBox="0 0 13 13"><path d="M.500.500l12 12M12.500.500l-12 12" stroke="#000"/></svg></button>
      </header>
      <div class="tabs" role="tablist">
        <button type="button" role="tab" class="tab file">文件</button>
        ${["主页", "共享", "查看"].map((t) => this.renderTab(t))}
        <div class="help">
          <svg width="14" height="8" viewBox="0 0 14 8" aria-hidden="true"><path d="M1 7l6-6 6 6" fill="none" stroke="#a5a5a5" stroke-width="1.300"/></svg>
          <button type="button" class="question" aria-label="帮助">?</button>
        </div>
      </div>
      <ribbon-bar></ribbon-bar>
      <div class="address">
        <div class="travel">
          <button type="button" aria-label="后退"><svg width="17" height="14" viewBox="0 0 17 14"><path d="M16 7H2M7 2L2 7l5 5" fill="none" stroke="#6b6b6b" stroke-width="1.700"/></svg></button>
          <button type="button" aria-label="前进"><svg width="17" height="14" viewBox="0 0 17 14"><path d="M1 7h14M10 2l5 5-5 5" fill="none" stroke="#dcdcdc" stroke-width="1.700"/></svg></button>
          <button type="button" aria-label="最近浏览的位置"><svg width="10" height="8" viewBox="0 0 10 8"><path d="M1 2l4 4 4-4" fill="none" stroke="#777" stroke-width="2"/></svg></button>
          <button type="button" aria-label="向上"><svg width="14" height="16" viewBox="0 0 14 16"><path d="M7 16V2M2 7l5-5 5 5" fill="none" stroke="#6b6b6b" stroke-width="1.800"/></svg></button>
        </div>
        <div class="box where">
          ${linkedFolder}
          <ol class="crumbs"><li class="less">«</li>${crumbs.map((c, i) => html`<li>${i ? next : nothing}<a href="#">${mixed(c)}</a></li>`)}</ol>
          <button type="button" aria-label="历史地址"><svg width="12" height="8" viewBox="0 0 12 8"><path d="M1 1.500l5 5 5-5" fill="none" stroke="#6b6b6b" stroke-width="1.800"/></svg></button>
          <button type="button" class="refresh" aria-label="刷新"><svg width="16" height="16" viewBox="0 0 16 16"><path d="M11.500 3.500a6 6 0 1 1-6.500-.500" fill="none" stroke="#6b6b6b" stroke-width="1.800"/><path d="M1.500 2H6v4.500" fill="none" stroke="#6b6b6b" stroke-width="1.600"/></svg></button>
        </div>
        <label class="box search">
          <svg width="18" height="18" viewBox="0 0 18 18" aria-hidden="true"><circle cx="11" cy="6.500" r="5" fill="none" stroke="#777"/><path d="M7.500 10.500l-6.500 6" stroke="#777" stroke-width="1.200"/></svg>
          <input type="search" aria-label="搜索" placeholder='搜索"串口调试助手"'>
        </label>
      </div>
      <main class="body">
        <place-tree .entries=${places}></place-tree>
        <file-list></file-list>
        <aside class="preview">没有预览。</aside>
      </main>
      <footer class="status">
        <span>${mixed("4 个项目")}</span><span class="sep"></span><span>选中 1 个项目</span><span class="amount">3.58 MB</span><span class="sep"></span>
        <div class="views">
          <button type="button" class="view" aria-label="详细信息"><svg width="18" height="16" viewBox="0 0 18 16"><path d="M.500.500h5v15h-5z" fill="#fff" stroke="#999"/><path d="M2 3h2v2H2z" fill="#38516e"/><path d="M2 7h2v2H2z" fill="#3b7f48"/><path d="M2 12h2v2H2z" fill="#d23d2c"/><path d="M8 3.500h3M13 3.500h3M8 8.500h3M13 8.500h3M8 13.500h3M13 13.500h3" stroke="#555"/></svg></button>
          <button type="button" aria-label="大图标"><svg width="17" height="14" viewBox="0 0 17 14"><path d="M.500.500h16v13H.500z" fill="#fff" stroke="#8d8d8d"/><path d="M2 2h13v10H2z" fill="#86b9e8"/><path d="M2 8l5-2 8 2v4H2z" fill="#3f79ad"/></svg></button>
        </div>
      </footer>
      <div class="mark">CSDN @羚漆</div>`;
  }
}
